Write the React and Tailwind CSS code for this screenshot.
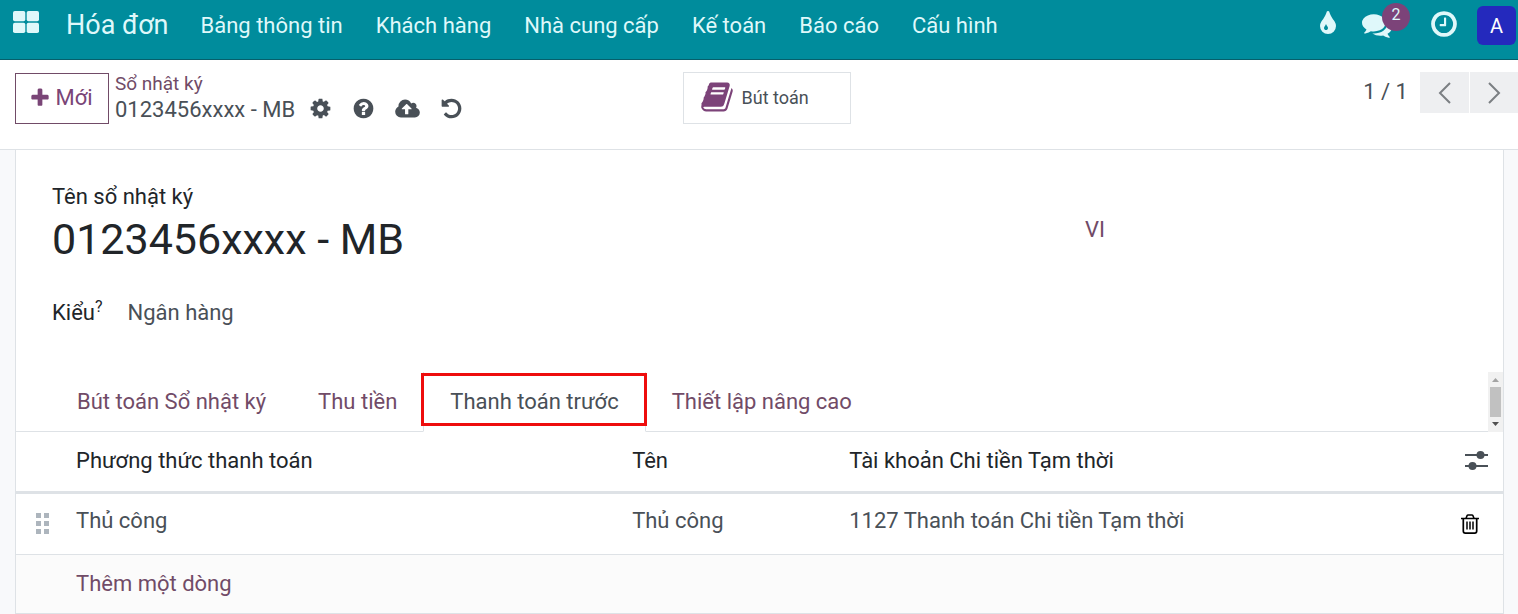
import React from "react";

const CIRCLE =
  "m224 0q0 209-103 385.500t-279.500 279.500-385.500 103-385.500-103-279.500-279.500-103-385.500 103-385.500 279.500-279.500 385.500-103 385.500 103 279.500 279.500 103 385.500z";

const icons = {
  plus: "M1600 736v192q0 40-28 68t-68 28h-416v416q0 40-28 68t-68 28h-192q-40 0-68-28t-28-68v-416h-416q-40 0-68-28t-28-68v-192q0-40 28-68t68-28h416v-416q0-40 28-68t68-28h192q40 0 68 28t28 68v416h416q40 0 68 28t28 68z",
  cog: "M1152 896q0-106-75-181t-181-75-181 75-75 181 75 181 181 75 181-75 75-181zm512-109v222q0 12-8 23t-20 13l-185 28q-19 54-39 91 35 50 107 138 10 12 10 25t-9 23q-27 37-99 108t-94 71q-12 0-26-9l-138-108q-44 23-91 38-16 136-29 186-7 28-36 28h-222q-14 0-24.500-8.500t-11.500-21.500l-28-184q-49-16-90-37l-141 107q-10 9-25 9-14 0-25-11-126-114-165-168-7-10-7-23 0-12 8-23 15-21 51-66.500t54-70.500q-27-50-41-99l-183-27q-13-2-21-12.500t-8-23.500v-222q0-12 8-23t19-13l186-28q14-46 39-92-40-57-107-138-10-12-10-24 0-10 9-23 26-36 98.500-107.500t94.500-71.500q13 0 26 10l138 107q44-23 91-38 16-136 29-186 7-28 36-28h222q14 0 24.500 8.500t11.500 21.500l28 184q49 16 90 37l142-107q9-9 24-9 13 0 25 10 129 119 165 170 7 8 7 22 0 12-8 23-15 21-51 66.500t-54 70.500q26 50 41 98l183 28q13 2 21 12.500t8 23.500z",
  help: "M1024 1376v-192q0-14-9-23t-23-9h-192q-14 0-23 9t-9 23v192q0 14 9 23t23 9h192q14 0 23-9t9-23zm256-672q0-88-55.500-163t-138.500-116-170-41q-243 0-371 213-15 24 8 42l132 100q7 6 19 6 16 0 25-12 53-68 86-92 34-24 86-24 48 0 85.500 26t37.500 59q0 38-20 61t-68 45q-63 28-115.500 86.500t-52.500 125.500v36q0 14 9 23t23 9h192q14 0 23-9t9-23q0-19 21.500-49.500t54.500-49.500q32-18 49-28.500t46-35 44.500-48 28-60.500 12.500-81zm384 192q0 209-103 385.500t-279.500 279.500-385.500 103-385.500-103-279.500-279.500-103-385.500 103-385.500 279.500-279.500 385.500-103 385.500 103 279.500 279.500 103 385.500z",
  upload: "M1280 928q0-14-9-23l-352-352q-9-9-23-9t-23 9l-351 351q-10 12-10 24 0 14 9 23t23 9h224v352q0 13 9.500 22.500t22.500 9.500h192q13 0 22.500-9.500t9.500-22.500v-352h224q13 0 22.500-9.500t9.500-22.500zm640 288q0 159-112.500 271.500t-271.500 112.500h-1088q-185 0-316.500-131.500t-131.500-316.500q0-130 70-240t188-165q-2-30-2-43 0-212 150-362t362-150q156 0 285.500 87t188.500 231q71-62 166-62 106 0 181 75t75 181q0 76-41 138 130 31 213.500 135.500t83.500 238.500z",
  undo: "M1664 896q0 156-61 298t-164 245-245 164-298 61q-172 0-327-72.500t-264-204.500q-7-10-6.500-22.500t8.500-20.500l137-138q10-9 25-9 16 2 23 12 73 95 179 147t225 52q104 0 198.500-40.500t163.500-109.500 109.500-163.500 40.500-198.500-40.500-198.500-109.500-163.500-163.500-109.500-198.500-40.500q-98 0-188 35.500t-160 101.500l137 138q31 30 14 69-17 40-59 40h-448q-26 0-45-19t-19-45v-448q0-42 40-59 39-17 69 14l130 129q107-101 244.500-156.500t284.500-55.500q156 0 298 61t245 164 164 245 61 298z",
  tint: "M896 1152q0-36-20-69-1-1-15.500-22.500t-25.500-38-25-44-21-50.500q-4-16-21-16t-21 16q-7 23-21 50.500t-25 44-25.500 38-15.500 22.500q-20 33-20 69 0 53 37.500 90.500t90.500 37.500 90.500-37.500 37.500-90.500zm512-128q0 212-150 362t-362 150-362-150-150-362q0-145 81-275 6-9 62.500-90.500t101-151 99.500-178 83-201.500q9-30 34-47t51-17 51.500 17 33.500 47q28 93 83 201.500t99.500 178 101 151 62.500 90.500q81 127 81 275z",
  comments: "M1408 768q0 139-94 257t-256.500 186.500-353.500 68.500q-86 0-176-16-124 88-278 128-36 9-86 16h-3q-11 0-20.500-8t-11.500-21q-1-3-1-6.500t.5-6.500 2-6l2.500-5 3.500-5.500 4-5 4.500-5 4-4.500q5-6 23-25t26-29.500 22.500-29 25-38.500 20.500-44q-124-72-195-177t-71-224q0-139 94-257t256.500-186.500 353.500-68.500 353.500 68.500 256.500 186.500 94 257zm384 256q0 120-71 224.500t-195 176.500q10 24 20.500 44t25 38.500 22.500 29 26 29.500 23 25q1 1 4 4.500t4.500 5 4 5 3.500 5.500l2.500 5 2 6 .5 6.500-1 6.500q-3 14-13 22t-22 7q-50-7-86-16-154-40-278-128-90 16-176 16-271 0-472-132 58 4 88 4 161 0 309-45t264-129q125-92 192-212t67-254q0-77-23-152 129 71 204 178t75 230z",
  clock:
    "M1024 544v448q0 14-9 23t-23 9h-320q-14 0-23-9t-9-23v-64q0-14 9-23t23-9h224v-352q0-14 9-23t23-9h64q14 0 23 9t9 23zm416 352q0-148-73-273t-198-198-273-73-273 73-198 198-73 273 73 273 198 198 273 73 273-73 198-198 73-273z" +
    CIRCLE,
  book: "M1703 478q40 57 18 129l-275 906q-19 64-76.500 107.500t-122.500 43.500h-923q-77 0-148.500-53.500t-99.500-131.500q-24-67-2-127 0-4 3-27t4-37q1-8-3-21.500t-3-19.500q2-11 8-21t16.500-23.500 16.500-23.500q23-38 45-91.500t30-91.500q3-10 .5-30t-.5-28q3-11 17-28t17-23q21-36 42-92t25-90q1-9-2.500-32t.5-28q4-13 22-30.500t22-22.500q19-26 42.500-84.500t27.500-96.500q1-8-3-25.500t-2-26.500q2-8 9-18t18-23 17-21q8-12 16.500-30.500t15-35 16-36 19.500-32 26.500-23.500 36-11.500 47.500 5.500l-1 3q38-9 51-9h761q74 0 114 56t18 130l-274 906q-36 119-71.500 153.500t-128.500 34.500h-869q-27 0-38 15-11 16-1 43 24 70 144 70h923q29 0 56-15.500t35-41.500l300-987q7-22 5-57 38 15 59 43zm-1064 2q-4 13 2 22.500t20 9.500h608q13 0 25.500-9.500t16.500-22.500l21-64q4-13-2-22.500t-20-9.500h-608q-13 0-25.500 9.500t-16.500 22.500zm-83 256q-4 13 2 22.500t20 9.500h608q13 0 25.500-9.500t16.500-22.500l21-64q4-13-2-22.500t-20-9.500h-608q-13 0-25.500 9.500t-16.500 22.500z",
};

function Icon({ name, className, viewBox = "0 0 1792 1792" }) {
  return (
    <svg viewBox={viewBox} fill="currentColor" className={className} aria-hidden="true">
      <path d={icons[name]} />
    </svg>
  );
}

function AppsIcon() {
  return (
    <svg viewBox="0 0 26 22" className="h-[22px] w-[26px]" fill="currentColor" aria-hidden="true">
      <rect x="0" y="0" width="12.300" height="10.300" rx="1.800" />
      <rect x="13.700" y="0" width="12.300" height="10.300" rx="1.800" />
      <rect x="0" y="11.700" width="12.300" height="10.300" rx="1.800" />
      <rect x="13.700" y="11.700" width="12.300" height="10.300" rx="1.800" />
    </svg>
  );
}

function Chevron({ d }) {
  return (
    <svg viewBox="0 0 14 24" className="h-6 w-3.5" fill="none" stroke="currentColor" strokeWidth="2" aria-hidden="true">
      <path d={d} />
    </svg>
  );
}

function SlidersIcon() {
  return (
    <svg viewBox="0 0 24 20" className="h-5 w-6" fill="currentColor" aria-hidden="true">
      <rect x="0" y="3" width="23" height="2" />
      <rect x="0" y="14" width="23" height="2" />
      <circle cx="15.500" cy="4" r="4" />
      <circle cx="7.500" cy="15" r="4" />
    </svg>
  );
}

function TrashIcon() {
  return (
    <svg viewBox="0 0 18 20" className="h-5 w-[18px]" fill="none" stroke="currentColor" aria-hidden="true">
      <path d="M0 4.500h18" strokeWidth="1.500" />
      <path d="M5 4.500L6 1.800Q6.300 1 7.200 1h3.600q.9 0 1.200.8l1 2.700" strokeWidth="1.600" />
      <path d="M2.300 5v12q0 2.100 2 2.100h9.400q2 0 2-2.100V5" strokeWidth="1.700" />
      <path d="M6 7.500v8M9 7.500v8M12 7.500v8" strokeWidth="1.500" />
    </svg>
  );
}

function DragIcon() {
  return (
    <svg viewBox="0 0 14 22" className="h-[22px] w-3.5" fill="currentColor" aria-hidden="true">
      {[0, 8, 16].map((y) => (
        <React.Fragment key={y}>
          <rect x="0" y={y} width="5" height="5" />
          <rect x="8" y={y} width="5" height="5" />
        </React.Fragment>
      ))}
    </svg>
  );
}

function TabScroll() {
  return (
    <div className="flex w-[15px] flex-col items-center bg-[#f1f1f1] pt-1.5" aria-hidden="true">
      <svg viewBox="0 0 7 4" className="h-1 w-[7px]" fill="#a3a3a3"><path d="M0 4L3.500 0 7 4z" /></svg>
      <div className="my-[5px] h-[30px] w-[11px] bg-[#c1c1c1]" />
      <svg viewBox="0 0 7 4" className="h-1 w-[7px]" fill="#505050"><path d="M0 0h7L3.500 4z" /></svg>
    </div>
  );
}

const menu = ["Bảng thông tin", "Khách hàng", "Nhà cung cấp", "Kế toán", "Báo cáo", "Cấu hình"];
const tabs = ["Bút toán Sổ nhật ký", "Thu tiền", "Thanh toán trước", "Thiết lập nâng cao"];

function Navbar() {
  return (
    <header className="flex h-[60px] items-start border-b border-[#065f6b] bg-[#008c9c] pl-[13px] text-[#dff8fa]">
      <button className="mt-[11px]" aria-label="Ứng dụng"><AppsIcon /></button>
      <a href="#" className="ml-[27px] mt-[5px] text-[27px] leading-10">Hóa đơn</a>
      <nav className="ml-8 mt-1.5 flex flex-1 gap-[33px] whitespace-nowrap text-[22px] leading-10">
        {menu.map((m) => <a key={m} href="#">{m}</a>)}
      </nav>
      <div className="flex items-start pr-0.5">
        <button className="mt-2.5" aria-label="Màu sắc"><Icon name="tint" className="size-7" /></button>
        <button className="relative ml-5 mt-2.5" aria-label="Hội thoại">
          <Icon name="comments" className="size-[30px]" />
          <span className="absolute -top-[7px] left-5 flex size-7 items-center justify-center rounded-full bg-[#7c4379] pb-1 text-base">2</span>
        </button>
        <button className="ml-[37px] mt-[9px]" aria-label="Hoạt động"><Icon name="clock" className="size-[30px]" /></button>
        <button className="ml-[18px] mt-1.5 flex h-[39px] w-[39px] items-center justify-center rounded-md bg-[#2429bd] text-xl text-white">A</button>
      </div>
    </header>
  );
}

function ControlPanel() {
  return (
    <div className="grid h-[90px] grid-cols-[1fr_168px_1fr] items-start border-b border-[#dee2e6] bg-white pl-[15px] pt-3">
      <div className="flex items-start">
        <button className="mt-px flex h-[51px] w-[94px] items-center justify-center gap-1 border border-[#714b67] pb-0.5 pr-0.5 text-[22px] text-[#7a4577]">
          <Icon name="plus" className="size-[22px]" />
          Mới
        </button>
        <div className="ml-1.5 whitespace-nowrap">
          <a href="#" className="block text-[19px] leading-[23px] text-[#714b67]">Sổ nhật ký</a>
          <div className="flex items-start text-[22px] leading-[30px] text-[#495057]">
            <span>0123456xxxx - MB</span>
            <div className="ml-3.5 flex items-center gap-5 pt-0.5">
              <button aria-label="Thao tác"><Icon name="cog" className="size-[23px]" /></button>
              <button aria-label="Trợ giúp"><Icon name="help" className="size-[23px]" /></button>
              <button aria-label="Lưu"><Icon name="upload" viewBox="0 0 1920 1792" className="h-[23px] w-[25px]" /></button>
              <button aria-label="Hủy thay đổi"><Icon name="undo" className="size-[23px]" /></button>
            </div>
          </div>
        </div>
      </div>
      <button className="flex h-[52px] items-center gap-2 border border-[#dee2e6] pb-0.5 pl-4 text-[18px] text-[#495057]">
        <Icon name="book" className="size-[34px] text-[#7c4379]" />
        Bút toán
      </button>
      <div className="flex items-start justify-end text-[22px] text-[#495057]">
        <span className="mr-3 leading-[39px]">1 / 1</span>
        <div className="flex gap-px text-[#7b7f83]">
          <button className="flex h-[41px] w-[49px] items-center justify-center bg-[#eeeff1]" aria-label="Trước"><Chevron d="M12 2L2 12l10 10" /></button>
          <button className="flex h-[41px] w-12 items-center justify-center bg-[#eeeff1]" aria-label="Sau"><Chevron d="M2 2l10 10L2 22" /></button>
        </div>
      </div>
    </div>
  );
}

function Lines() {
  return (
    <table className="w-full table-fixed text-left text-[22px] leading-[30px]">
      <colgroup>
        <col className="w-12" />
        <col className="w-[37.4%]" />
        <col className="w-[14.6%]" />
        <col />
        <col className="w-[66px]" />
      </colgroup>
      <thead>
        <tr className="h-[60px] border-b-3 border-[#dee2e6] text-[#212529]">
          <th />
          <th className="px-3 font-normal">Phương thức thanh toán</th>
          <th className="px-3 font-normal">Tên</th>
          <th className="px-3 font-normal">Tài khoản Chi tiền Tạm thời</th>
          <th className="pr-3.5">
            <button className="ml-auto block text-[#495057]" aria-label="Tùy chọn cột"><SlidersIcon /></button>
          </th>
        </tr>
      </thead>
      <tbody className="text-[#495057]">
        <tr className="h-[62px] border-b border-[#dee2e6]">
          <td className="pl-5 text-[#adb5bd]"><DragIcon /></td>
          <td className="px-3 pb-1.5">Thủ công</td>
          <td className="px-3 pb-1.5">Thủ công</td>
          <td className="px-3 pb-1.5">1127 Thanh toán Chi tiền Tạm thời</td>
          <td className="pr-6">
            <button className="ml-auto block text-black" aria-label="Xóa"><TrashIcon /></button>
          </td>
        </tr>
        <tr className="h-[59px] border-b border-[#dee2e6] bg-[#fbfbfb]">
          <td />
          <td colSpan={4} className="px-3"><a href="#" className="text-[#714b67]">Thêm một dòng</a></td>
        </tr>
      </tbody>
    </table>
  );
}

export default function App() {
  return (
    <div className="min-h-screen bg-[#f8f9fb] font-[Roboto,sans-serif]">
      <Navbar />
      <ControlPanel />
      <main className="ml-[15px] mr-3.5 border-x border-[#dee2e6] bg-white">
        <div className="px-9 pt-8 text-[22px] leading-[30px]">
          <label htmlFor="journal" className="block text-[#212529]">Tên sổ nhật ký</label>
          <div className="flex items-start">
            <input id="journal" defaultValue="0123456xxxx - MB" className="h-[54px] w-[73%] bg-transparent text-[43px] text-[#212529] outline-none" />
            <button className="mt-[3px] text-[#714b67]">VI</button>
          </div>
          <div className="mt-8 flex gap-[25px]">
            <span className="text-[#212529]">Kiểu<sup className="text-[16px]">?</sup></span>
            <span className="text-[#495057]">Ngân hàng</span>
          </div>
        </div>
        <div className="mt-11 flex h-[60px] text-[22px]">
          <div role="tablist" className="flex flex-1 whitespace-nowrap">
            <div className="w-[35px] border-b border-[#dee2e6]" />
            {tabs.map((t) =>
              t === "Thanh toán trước" ? (
                <button key={t} role="tab" aria-selected="true" className="relative border-x border-b border-[#dee2e6] border-b-white px-[26px] text-[#495057]">
                  {t}
                  <span className="absolute -left-[3px] -right-0.5 top-px h-[53px] border-3 border-[#ee0d0d]" />
                </button>
              ) : (
                <button key={t} role="tab" aria-selected="false" className="border-b border-[#dee2e6] px-[26px] text-[#714b67]">{t}</button>
              )
            )}
            <div className="flex-1 border-b border-[#dee2e6]" />
          </div>
          <TabScroll />
        </div>
        <Lines />
      </main>
    </div>
  );
}
